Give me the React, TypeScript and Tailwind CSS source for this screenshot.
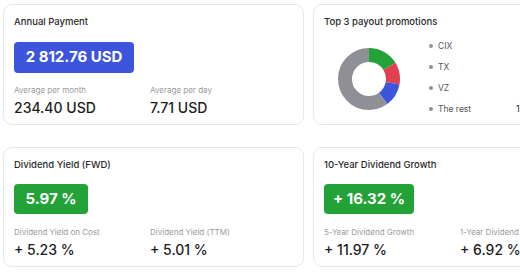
import React from "react";

const font = { fontFamily: "Inter, 'Noto Sans', sans-serif" };

function Card({ children, className = "" }: { children: React.ReactNode; className?: string }) {
  return (
    <div className={`w-[301px] shrink-0 rounded-[9px] border border-[#e2e9f3] bg-white px-[10px] ${className}`}>
      {children}
    </div>
  );
}

function Stat({ label, value }: { label: string; value: string }) {
  return (
    <div className="w-[136px] shrink-0 whitespace-nowrap">
      <div className="text-[8px] leading-[10px] text-[#9a9a9a]">{label}</div>
      <div className="mt-[5px] text-[14px] leading-[16px] font-medium text-[#1d1d1d]">{value}</div>
    </div>
  );
}

function Donut() {
  const r = 24;
  const c = 2 * Math.PI * r;
  const segs = [
    { color: "#23a237", from: 0, to: 58 },
    { color: "#e0404f", from: 58, to: 100 },
    { color: "#3d55dd", from: 100, to: 143 },
    { color: "#8f9096", from: 143, to: 360 },
  ];
  return (
    <svg width="64" height="64" viewBox="0 0 64 64">
      <g transform="rotate(-90 32 32)">
        {segs.map((s, i) => {
          const len = ((s.to - s.from) / 360) * c;
          return (
            <circle
              key={i}
              cx="32"
              cy="32"
              r={r}
              fill="none"
              stroke={s.color}
              strokeWidth="14"
              strokeDasharray={`${len} ${c - len}`}
              strokeDashoffset={-(s.from / 360) * c}
            />
          );
        })}
      </g>
    </svg>
  );
}

export default function App() {
  const legend = [
    { name: "CIX", value: "" },
    { name: "TX", value: "" },
    { name: "VZ", value: "" },
    { name: "The rest", value: "1 871.02 USD" },
  ];
  return (
    <div className="w-[520px] h-[272px] overflow-hidden bg-white" style={font}>
      <div className="flex flex-col gap-[22px] pl-[3px] pt-[4px]">
        <div className="flex gap-[9px]">
          <Card className="h-[121px] pt-[11px]">
            <div className="text-[9.5px] leading-[12px] font-medium text-[#2a2a2a]">Annual Payment</div>
            <div className="mt-[14px] flex h-[31px] w-[120px] items-center justify-center rounded-[4px] bg-[#3d55dd] text-[15px] font-bold text-white">
              2 812.76 USD
            </div>
            <div className="mt-[12px] flex">
              <Stat label="Average per month" value="234.40 USD" />
              <Stat label="Average per day" value="7.71 USD" />
            </div>
          </Card>
          <Card className="h-[121px] pt-[11px]">
            <div className="text-[9.5px] leading-[12px] font-medium text-[#2a2a2a]">Top 3 payout promotions</div>
            <div className="mt-[1px] flex">
              <div className="ml-[13px] mt-[18px]">
                <Donut />
              </div>
              <div className="ml-[28px] mt-[11px] flex flex-col gap-[9px]">
                {legend.map((l) => (
                  <div key={l.name} className="flex h-[12px] items-center whitespace-nowrap">
                    <span className="h-[4px] w-[4px] rounded-full bg-[#8f9096]" />
                    <span className="ml-[5px] w-[75px] text-[8.5px] text-[#555]">{l.name}</span>
                    <span className="ml-[3px] text-[9px] text-[#1d1d1d]">{l.value}</span>
                  </div>
                ))}
              </div>
            </div>
          </Card>
        </div>
        <div className="flex gap-[9px]">
          <Card className="h-[120px] pt-[11px]">
            <div className="text-[9.5px] leading-[12px] font-medium text-[#2a2a2a]">Dividend Yield (FWD)</div>
            <div className="mt-[13px] flex h-[30px] w-[74px] items-center justify-center rounded-[4px] bg-[#23a237] text-[15px] font-bold text-white">
              5.97 %
            </div>
            <div className="mt-[13px] flex">
              <Stat label="Dividend Yield on Cost" value="+ 5.23 %" />
              <Stat label="Dividend Yield (TTM)" value="+ 5.01 %" />
            </div>
          </Card>
          <Card className="h-[120px] pt-[11px]">
            <div className="text-[9.5px] leading-[12px] font-medium text-[#2a2a2a]">10-Year Dividend Growth</div>
            <div className="mt-[13px] flex h-[30px] w-[90px] items-center justify-center rounded-[4px] bg-[#23a237] text-[15px] font-bold text-white">
              + 16.32 %
            </div>
            <div className="mt-[13px] flex">
              <Stat label="5-Year Dividend Growth" value="+ 11.97 %" />
              <Stat label="1-Year Dividend Growth" value="+ 6.92 %" />
            </div>
          </Card>
        </div>
      </div>
    </div>
  );
}
